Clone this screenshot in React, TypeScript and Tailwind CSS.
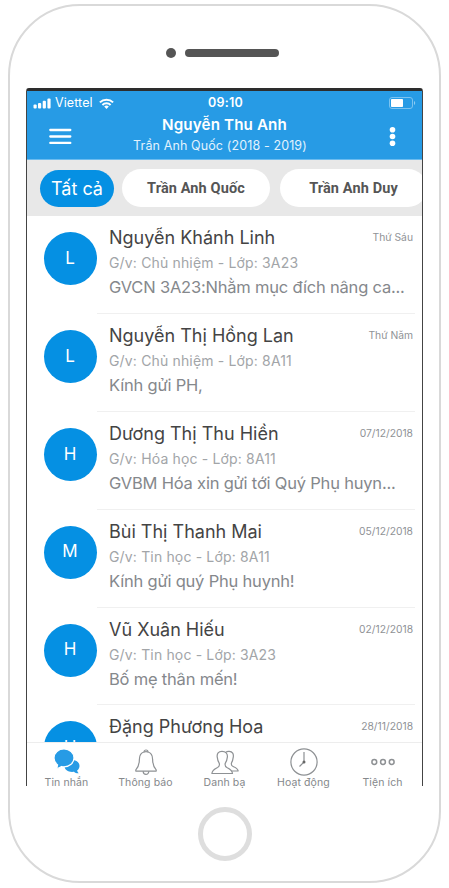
import { ReactNode } from "react";

type Message = {
  initial: string;
  name: string;
  role: string;
  preview: string;
  date: string;
};

const messages: Message[] = [
  { initial: "L", name: "Nguyễn Khánh Linh", role: "G/v: Chủ nhiệm - Lớp: 3A23", preview: "GVCN 3A23:Nhằm mục đích nâng ca...", date: "Thứ Sáu" },
  { initial: "L", name: "Nguyễn Thị Hồng Lan", role: "G/v: Chủ nhiệm - Lớp: 8A11", preview: "Kính gửi PH,", date: "Thứ Năm" },
  { initial: "H", name: "Dương Thị Thu Hiền", role: "G/v: Hóa học - Lớp: 8A11", preview: "GVBM Hóa xin gửi tới Quý Phụ huyn...", date: "07/12/2018" },
  { initial: "M", name: "Bùi Thị Thanh Mai", role: "G/v: Tin học - Lớp: 8A11", preview: "Kính gửi quý Phụ huynh!", date: "05/12/2018" },
  { initial: "H", name: "Vũ Xuân Hiếu", role: "G/v: Tin học - Lớp: 3A23", preview: "Bố mẹ thân mến!", date: "02/12/2018" },
  { initial: "H", name: "Đặng Phương Hoa", role: "", preview: "", date: "28/11/2018" },
];

function StatusBar() {
  return (
    <div className="grid h-6 grid-cols-[1fr_auto_1fr] items-center px-[6px] text-white">
      <div className="flex items-center">
        <svg width="19" height="11" viewBox="0 0 19 11" fill="currentColor">
          <rect x="0.5" y="6.5" width="3.2" height="4" rx="1" />
          <rect x="5" y="5" width="3.2" height="5.5" rx="1" />
          <rect x="9.7" y="2.7" width="3.2" height="7.8" rx="1" />
          <rect x="14.4" y="0.4" width="3.2" height="10.1" rx="1" />
        </svg>
        <span className="ml-[3px] text-[12.5px] tracking-[0.1px]">Viettel</span>
        <svg className="ml-[6px]" width="15" height="11" viewBox="0 0 15 11" fill="none" stroke="currentColor" strokeWidth="2">
          <path d="M0.9 4.4a9.4 9.4 0 0 1 13.2 0" />
          <path d="M3.4 7a5.8 5.8 0 0 1 8.2 0" />
          <path d="M5.2 8.6a3.3 3.3 0 0 1 4.6 0L7.5 11z" fill="currentColor" stroke="none" />
        </svg>
      </div>
      <span className="pl-[2px] text-[12.5px] font-semibold tracking-[0.2px]">09:10</span>
      <svg className="justify-self-end" width="27" height="12" viewBox="0 0 27 12" fill="none">
        <rect x="0.5" y="0.5" width="23" height="11" rx="2.5" stroke="#7cc3f0" />
        <rect x="2" y="2" width="12" height="8" rx="0.8" fill="#fff" />
        <path d="M25 4v4c1.6-.8 1.6-3.2 0-4z" fill="#8fcdf3" />
      </svg>
    </div>
  );
}

function Header() {
  return (
    <header className="h-[69px] shrink-0 border-b border-[#6cbcef] bg-[#279be5]">
      <StatusBar />
      <div className="grid h-[44px] grid-cols-[1fr_auto_1fr] items-center pl-[22px] pr-[26px] text-white">
        <svg width="23" height="18" viewBox="0 0 23 18" stroke="currentColor" strokeWidth="2.3" strokeLinecap="round">
          <path d="M1.3 2h20M1.3 8.5h20M1.3 14.9h20" />
        </svg>
        <div className="-mt-[5px] flex flex-col items-center whitespace-nowrap pr-[5px]">
          <span className="pl-[9px] text-[15.2px] font-semibold leading-[21px] tracking-[0.12px]">Nguyễn Thu Anh</span>
          <span className="text-[12.5px] leading-[21px] tracking-[0.12px] text-[#e2f2fd]">Trần Anh Quốc (2018 - 2019)</span>
        </div>
        <svg className="justify-self-end" width="7" height="20" viewBox="0 0 7 20" fill="currentColor">
          <circle cx="3.5" cy="2.8" r="2.8" />
          <circle cx="3.5" cy="9.5" r="2.8" />
          <circle cx="3.5" cy="16.2" r="2.8" />
        </svg>
      </div>
    </header>
  );
}

function Filters() {
  return (
    <div className="flex h-14 shrink-0 items-center overflow-hidden bg-[#e8e8e8] pl-[13px]">
      <button className="mr-[8px] h-[37px] w-[74px] shrink-0 rounded-full bg-[#0590e3] text-[18px] text-white">Tất cả</button>
      <button className="mr-[10px] h-[38px] w-[148px] shrink-0 rounded-full bg-white pt-px font-[Roboto] text-[14.5px] font-bold tracking-[0.12px] text-[#555]">Trần Anh Quốc</button>
      <button className="h-[38px] w-[147px] shrink-0 rounded-full bg-white pt-px font-[Roboto] text-[14.5px] font-bold tracking-[0.12px] text-[#555]">Trần Anh Duy</button>
    </div>
  );
}

function MessageRow({ message }: { message: Message }) {
  return (
    <div className="flex h-[97.9px] shrink-0 pl-[17px] pr-[7px]">
      <div className="mt-[16px] flex size-[53px] shrink-0 items-center justify-center rounded-full bg-[#0590e3] pr-px text-[17px] text-white">
        {message.initial}
      </div>
      <div className="flex flex-1 whitespace-nowrap border-b border-[#f0f0f0] pl-[12px]">
        <div className="min-w-0 flex-1 pt-[9px]">
          <div className="text-[18px] leading-[26px] text-[#444]">{message.name}</div>
          <div className="text-[14px] leading-[23px] tracking-[0.16px] text-[#a2a5a8]">{message.role}</div>
          <div className="text-[16.5px] leading-[27px] tracking-[-0.2px] text-[#85888c]">{message.preview}</div>
        </div>
        <div className="w-0 pr-[2px] pt-[13px]">
          <div className="float-right text-[10.3px] leading-4 text-[#8f9296]">{message.date}</div>
        </div>
      </div>
    </div>
  );
}

function Tab({ label, children }: { label: string; children: ReactNode }) {
  return (
    <div className="flex w-[79px] flex-col items-center">
      <div className="flex h-[33px] shrink-0 items-center justify-center pt-[5px] text-[#8e9194]">{children}</div>
      <span className="whitespace-nowrap text-[10.5px] leading-[13px] tracking-[0.1px] text-[#85888b]">{label}</span>
    </div>
  );
}

function TabBar() {
  return (
    <nav className="flex h-[44px] shrink-0 border-t border-[#ededed] bg-white">
      <Tab label="Tin nhắn">
        <svg width="26" height="26" viewBox="0 0 26 26" fill="#279be5">
          <path d="M18 11c4.300 0 7.500 2.600 7.500 6 0 1.900-.9 3.500-2.400 4.600.2 1.100.8 2 1.600 2.700-1.900.1-3.500-.4-4.700-1.500-5.200.8-9.500-1.800-9.500-5.800 0-3.400 3.200-6 7.500-6z" />
          <path d="M10 0C4.500 0 0 4 0 9c0 2.800 1.400 5.200 3.600 6.900-.1 1.400-.7 2.600-1.600 3.600 2.300-.1 4.200-.8 5.600-2 .8.2 1.600.3 2.400.3 5.600 0 10-3.900 10-8.800S15.600 0 10 0z" stroke="#fff" strokeWidth="1.200" />
        </svg>
      </Tab>
      <Tab label="Thông báo">
        <svg width="22" height="28" viewBox="1 0 22 28" fill="none" stroke="currentColor" strokeWidth="1.2" strokeLinejoin="round">
          <path d="M10 4a2 2 0 1 1 4 0c3.100.8 4.500 3.600 4.600 7.200.1 5.400 1.100 8.200 3.600 10.700v1.200H1.800v-1.200c2.500-2.500 3.500-5.300 3.600-10.700.1-3.600 1.500-6.400 4.600-7.200z" />
          <path d="M10 4c1.200-.4 2.800-.4 4 0M9.200 23.200c0 4.200 5.600 4.200 5.600 0" />
        </svg>
      </Tab>
      <Tab label="Danh bạ">
        <svg width="28" height="25" viewBox="0 0 28 25" fill="none" stroke="currentColor" strokeWidth="1.2" strokeLinejoin="round">
          <path d="M11 1.300c-3.600 0-5.200 2.200-4.800 5.600.3 2.700.8 4.900 2.100 6.500.5 2-.1 3.200-1.700 4.100-3 1.400-5.400 2.300-5.700 6H21.500c-.3-3.700-2.600-4.600-5.600-6-1.600-.9-2.100-2.100-1.700-4.100 1.300-1.600 1.900-3.800 2.200-6.500.3-3.400-1.800-5.600-5.400-5.600z" />
          <path d="M14.600 2.400c1-.8 2.300-1.100 3.600-1 3.400.2 4.500 2.400 4.100 5.500-.3 2.400-.7 4.400-1.800 6-.5 1.700 0 2.900 1.600 3.600 2.600 1.100 4.700 1.800 5.100 4.500h-6.300" />
        </svg>
      </Tab>
      <Tab label="Hoạt động">
        <svg width="28" height="28" viewBox="0 0 28 28" fill="none" stroke="currentColor" strokeWidth="1.2">
          <circle cx="14" cy="14" r="13.1" />
          <path d="M14 4v10l-4.500 4.500" />
          <circle cx="14" cy="14" r="1.5" fill="#666" stroke="none" />
        </svg>
      </Tab>
      <Tab label="Tiện ích">
        <svg width="24" height="8" viewBox="0 0 24 8" fill="none" stroke="currentColor" strokeWidth="1.5">
          <circle cx="3.3" cy="4" r="2.4" />
          <circle cx="12" cy="4" r="2.4" />
          <circle cx="20.7" cy="4" r="2.4" />
        </svg>
      </Tab>
    </nav>
  );
}

export default function App() {
  return (
    <div className="h-[888px] w-[449px] overflow-hidden bg-white pl-[8px] pt-[4px] font-[Inter,sans-serif]">
      <div className="flex h-[879px] w-[433px] flex-col items-center rounded-[72px] border-2 border-[#d9d9d9]">
        <div className="flex h-[82px] w-full shrink-0 items-center pb-[14px] pl-[156px] pt-[14px]">
          <div className="mt-[11px] size-[10px] rounded-full bg-[#555]" />
          <div className="ml-[9px] mt-[12px] h-[8px] w-[94px] rounded-full bg-[#555]" />
        </div>
        <div className="flex h-[698px] w-[397px] shrink-0 flex-col rounded-t-[3px] border-x border-t-[3px] border-x-[#444] border-t-[#2d2d2d]">
          <Header />
          <Filters />
          <main className="flex min-h-0 flex-1 flex-col overflow-hidden">
            {messages.map((message) => (
              <MessageRow key={message.name} message={message} />
            ))}
          </main>
          <TabBar />
        </div>
        <div className="mt-[21px] size-[54px] shrink-0 rounded-full border-[5px] border-[#dedede]" />
      </div>
    </div>
  );
}
